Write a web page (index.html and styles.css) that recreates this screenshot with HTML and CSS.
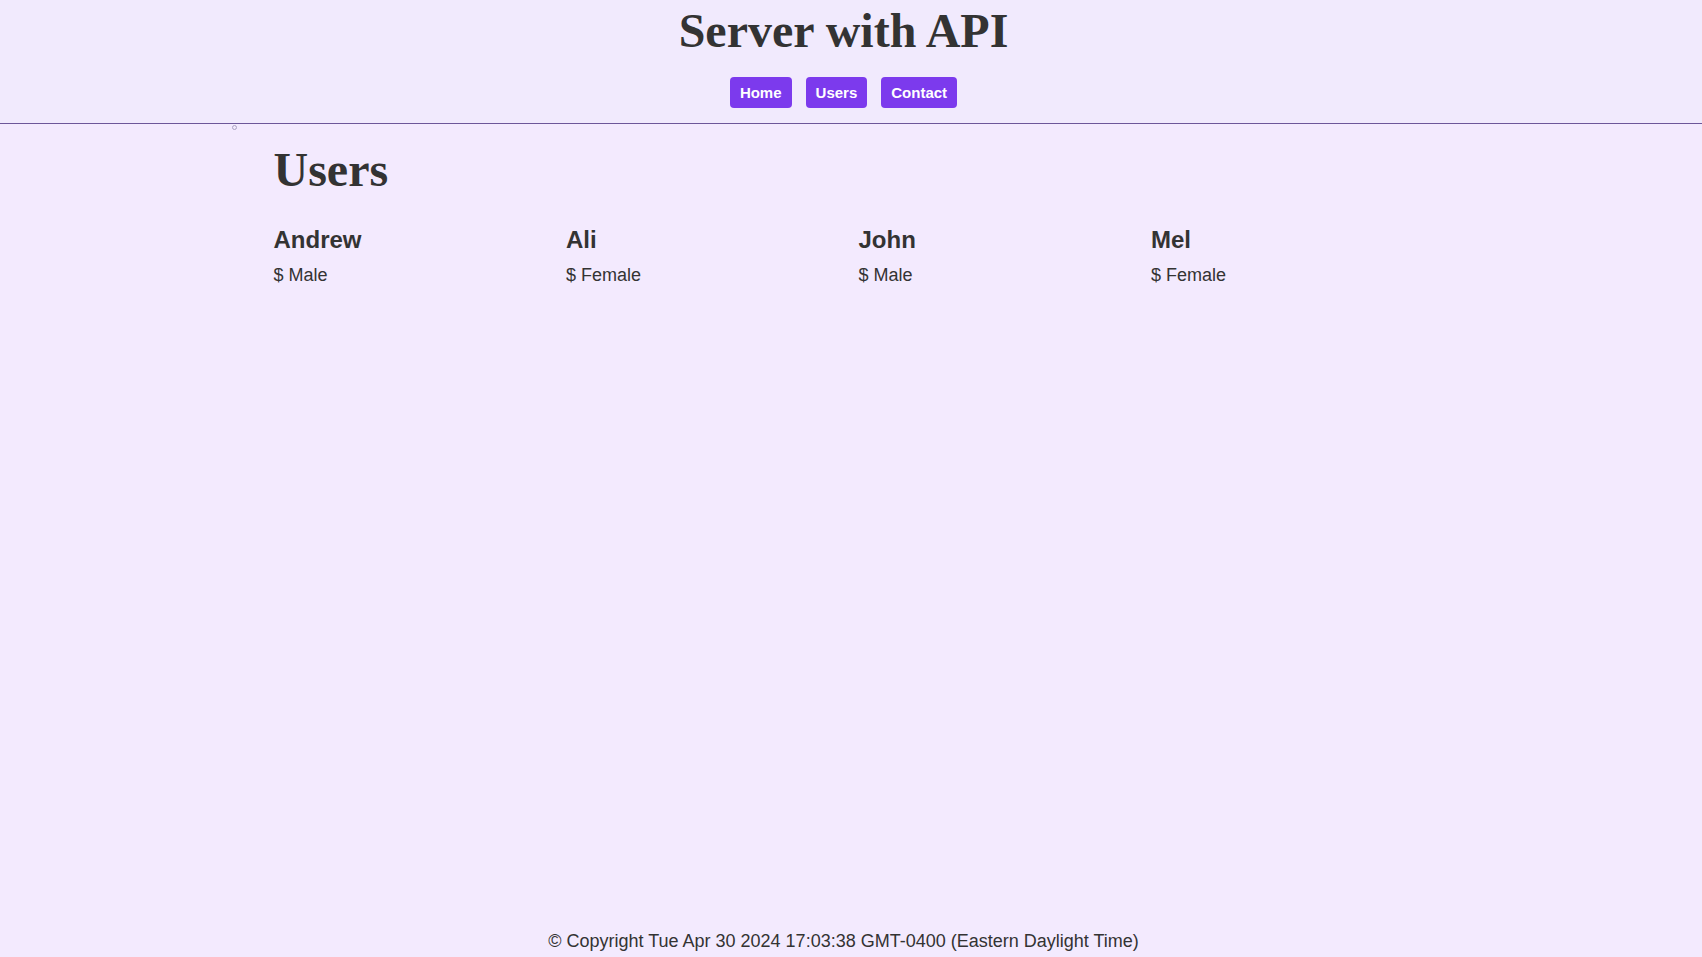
FILE: index.html
```html
<!DOCTYPE html>
<html lang="en">
<head>
<meta charset="utf-8">
<title>Server with API</title>
<link rel="stylesheet" href="styles.css">
</head>
<body>
<header class="site-header">
  <h1 class="site-title">Server with API</h1>
  <nav class="site-nav">
    <a class="nav-btn" href="#">Home</a>
    <a class="nav-btn" href="#">Users</a>
    <a class="nav-btn" href="#">Contact</a>
  </nav>
</header>
<main class="page">
  <div class="container">
    <div class="marker"></div>
    <h1 class="page-title">Users</h1>
    <div class="users">
      <div class="user">
        <h2 class="user-name">Andrew</h2>
        <p class="user-info">$ Male</p>
      </div>
      <div class="user">
        <h2 class="user-name">Ali</h2>
        <p class="user-info">$ Female</p>
      </div>
      <div class="user">
        <h2 class="user-name">John</h2>
        <p class="user-info">$ Male</p>
      </div>
      <div class="user">
        <h2 class="user-name">Mel</h2>
        <p class="user-info">$ Female</p>
      </div>
    </div>
  </div>
</main>
<footer class="site-footer">© Copyright Tue Apr 30 2024 17:03:38 GMT-0400 (Eastern Daylight Time)</footer>
</body>
</html>
```

FILE: styles.css
```css
* {
  box-sizing: border-box;
}

html, body {
  margin: 0;
  padding: 0;
}

body {
  min-height: 100vh;
  display: flex;
  flex-direction: column;
  font-family: "Liberation Sans", Arial, sans-serif;
  color: #333;
  background: #f3eafe;
}

.site-header {
  text-align: center;
  padding: 4px 15px 15px 0;
  border-bottom: 1px solid #6c5699;
  background: #f1eafd;
}

.site-title {
  margin: 0;
  font-family: "Liberation Serif", "Times New Roman", serif;
  font-size: 48px;
  line-height: 53px;
  font-weight: bold;
  color: #333;
}

.site-nav {
  display: flex;
  justify-content: center;
  gap: 14px;
  margin-top: 20px;
}

.nav-btn {
  display: inline-block;
  background: #7c3aed;
  color: #fff;
  font-weight: bold;
  font-size: 15px;
  line-height: 18px;
  padding: 7px 10px 6px;
  border-radius: 4px;
  text-decoration: none;
}

.page {
  flex: 1;
  padding-right: 15px;
}

.container {
  width: 1170px;
  margin: 0 auto;
  padding: 0 15px;
}

.marker {
  width: 5px;
  height: 5px;
  margin: 1px 0 0 -42px;
  border: 1px solid #aaa2c2;
  border-radius: 50%;
}

.page-title {
  margin: 13px 0 0;
  font-family: "Liberation Serif", "Times New Roman", serif;
  font-size: 48px;
  line-height: 53px;
  font-weight: bold;
}

.users {
  display: grid;
  grid-template-columns: repeat(4, 1fr);
  margin: 30px -15px 0;
}

.user {
  padding: 0 15px;
}

.user-name {
  margin: 0;
  font-size: 24px;
  line-height: 28px;
  font-weight: bold;
}

.user-info {
  margin: 11px 0 0;
  font-size: 18px;
  line-height: 21px;
}

.site-footer {
  text-align: center;
  padding: 0 15px 5px 0;
  font-size: 18px;
  line-height: 21px;
}
```
